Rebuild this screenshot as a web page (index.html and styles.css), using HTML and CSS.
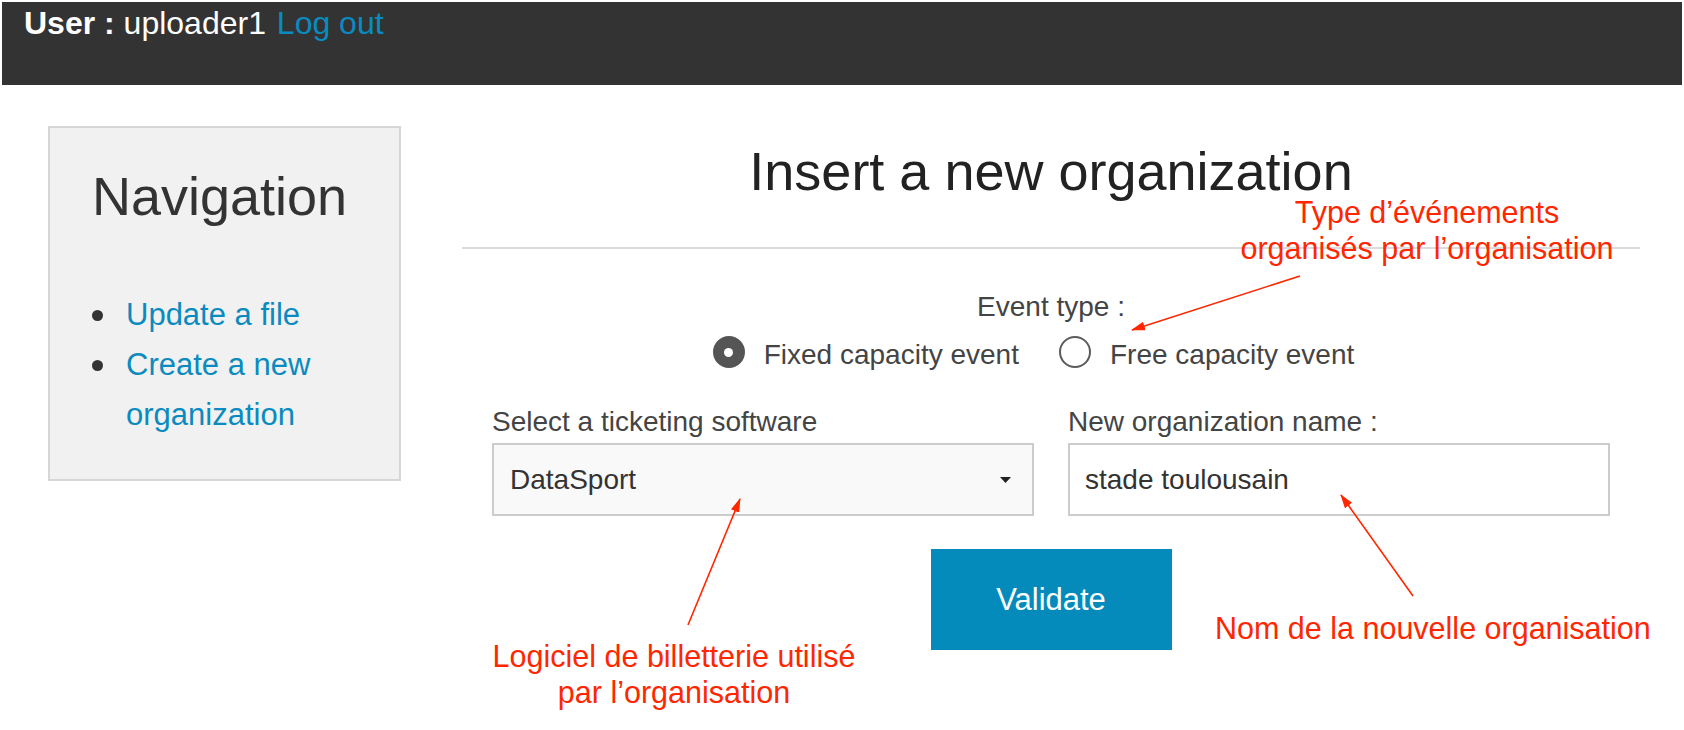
FILE: index.html
```html
<!DOCTYPE html>
<html lang="en">
<head>
<meta charset="utf-8">
<title>Insert a new organization</title>
<link rel="stylesheet" href="styles.css">
</head>
<body>
<div class="page">
  <header class="topbar">
    <span class="user"><b>User :</b> uploader1</span>
    <a class="logout" href="#">Log out</a>
  </header>

  <div class="layout">
    <aside class="nav">
      <h2 class="nav-title">Navigation</h2>
      <ul class="nav-list">
        <li><a href="#">Update a file</a></li>
        <li><a href="#">Create a new organization</a></li>
      </ul>
    </aside>

    <main class="main">
      <h1 class="title">Insert a new organization</h1>
      <hr class="rule">
      <form class="form">
        <div class="event-label">Event type :</div>
        <div class="radios">
          <label class="radio"><span class="dot checked"></span>Fixed capacity event</label>
          <label class="radio"><span class="dot"></span>Free capacity event</label>
        </div>
        <div class="fields">
          <div class="field">
            <div class="field-label">Select a ticketing software</div>
            <div class="select">
              <span>DataSport</span>
              <svg class="caret" width="11" height="6" viewBox="0 0 11 6"><polygon points="0,0 11,0 5.5,6" fill="#222"/></svg>
            </div>
          </div>
          <div class="field">
            <div class="field-label">New organization name :</div>
            <input class="text" type="text" value="stade toulousain">
          </div>
        </div>
        <div class="actions">
          <button class="validate" type="button">Validate</button>
        </div>
      </form>
    </main>
  </div>

  <div class="note note-type">Type d’événements<br>organisés par l’organisation</div>
  <div class="note note-soft">Logiciel de billetterie utilisé<br>par l’organisation</div>
  <div class="note note-name">Nom de la nouvelle organisation</div>

  <svg class="arrows" width="1684" height="730" viewBox="0 0 1684 730">
    <defs>
      <marker id="ah" viewBox="0 0 14 9" refX="13" refY="4.5" markerWidth="14" markerHeight="9" markerUnits="userSpaceOnUse" orient="auto">
        <path d="M0,0 L14,4.5 L0,9 z" fill="#ff2600"/>
      </marker>
    </defs>
    <line x1="1300" y1="276" x2="1132" y2="330" stroke="#ff2600" stroke-width="1.6" marker-end="url(#ah)"/>
    <line x1="688" y1="625" x2="740" y2="499" stroke="#ff2600" stroke-width="1.6" marker-end="url(#ah)"/>
    <line x1="1413" y1="596" x2="1341" y2="495" stroke="#ff2600" stroke-width="1.6" marker-end="url(#ah)"/>
  </svg>
</div>
</body>
</html>
```

FILE: styles.css
```css
html, body {
  margin: 0;
  padding: 0;
  background: #fff;
}

body {
  font-family: "Liberation Sans", Arial, Helvetica, sans-serif;
}

.page {
  position: relative;
  width: 1684px;
  height: 730px;
  overflow: hidden;
}

/* Top bar */
.topbar {
  margin: 2px 2px 0;
  height: 83px;
  box-sizing: border-box;
  padding: 3px 0 0 22px;
  background: #333;
  color: #fff;
  font-size: 32px;
  line-height: 36px;
}

.user b {
  font-weight: bold;
}

.logout {
  color: #0a8bc0;
  text-decoration: none;
  margin-left: 2px;
}

/* Layout */
.layout {
  display: flex;
  align-items: flex-start;
  padding: 41px 0 0 48px;
}

/* Navigation box */
.nav {
  width: 353px;
  box-sizing: border-box;
  border: 2px solid #d6d6d6;
  background: #f1f1f1;
  padding: 38px 20px 39px 42px;
}

.nav-title {
  margin: 0;
  font-size: 54px;
  line-height: 60px;
  font-weight: normal;
  color: #333;
}

.nav-list {
  list-style: none;
  margin: 64px 0 0;
  padding: 0;
  font-size: 31px;
  line-height: 50px;
}

.nav-list li {
  display: flex;
}

.nav-list li::before {
  content: "";
  flex: none;
  width: 11px;
  height: 11px;
  border-radius: 50%;
  background: #333;
  margin: 20px 23px 0 0;
}

.nav-list a {
  color: #0a8bbf;
  text-decoration: none;
}

/* Main */
.main {
  margin-left: 61px;
  width: 1178px;
  padding-top: 15px;
}

.title {
  margin: 0;
  text-align: center;
  font-size: 54px;
  line-height: 60px;
  font-weight: normal;
  color: #222;
}

.rule {
  margin: 46px 0 0;
  border: 0;
  height: 2px;
  background: #dcdcdc;
}

.form {
  width: 1118px;
  margin: 0 auto;
}

.event-label {
  margin-top: 41px;
  text-align: center;
  font-size: 28px;
  line-height: 34px;
  color: #444;
}

.radios {
  margin-top: 14px;
  display: flex;
  justify-content: center;
  gap: 40px;
  padding-right: 35px;
  font-size: 28px;
  line-height: 34px;
  color: #444;
}

.radio {
  display: flex;
  align-items: flex-start;
}

.dot {
  flex: none;
  width: 32px;
  height: 32px;
  box-sizing: border-box;
  border-radius: 50%;
  border: 2px solid #5a5a5a;
  background: #fff;
  margin: -2px 19px 0 0;
}

.dot.checked {
  background: #555;
  border-color: #555;
  display: flex;
  align-items: center;
  justify-content: center;
}

.dot.checked::after {
  content: "";
  width: 9px;
  height: 9px;
  border-radius: 50%;
  background: #fff;
}

.fields {
  margin-top: 33px;
  display: flex;
  gap: 34px;
}

.field {
  flex: 1;
  min-width: 0;
}

.field-label {
  font-size: 28px;
  line-height: 34px;
  color: #444;
  margin-bottom: 4px;
}

.select {
  height: 73px;
  box-sizing: border-box;
  border: 2px solid #ccc;
  background: #f9f9f9;
  display: flex;
  align-items: center;
  justify-content: space-between;
  padding: 0 21px 0 16px;
  font-size: 28px;
  color: #333;
}

.caret {
  display: block;
}

.text {
  display: block;
  width: 100%;
  height: 73px;
  box-sizing: border-box;
  margin: 0;
  border: 2px solid #ccc;
  background: #fff;
  padding: 0 15px;
  font-family: "Liberation Sans", Arial, sans-serif;
  font-size: 28px;
  color: #333;
  outline: none;
}

.actions {
  display: flex;
  justify-content: center;
  margin-top: 33px;
}

.validate {
  width: 241px;
  height: 101px;
  border: 0;
  border-radius: 0;
  background: #058bbb;
  color: #fff;
  font-family: "Liberation Sans", Arial, sans-serif;
  font-size: 31px;
  padding: 0;
  cursor: pointer;
}

/* Annotations (overlay) */
.note {
  position: absolute;
  color: #ff2600;
  font-size: 30.5px;
  line-height: 36px;
  white-space: nowrap;
}

.note-type {
  left: 1217px;
  top: 194px;
  width: 420px;
  text-align: center;
}

.note-soft {
  left: 474px;
  top: 638px;
  width: 400px;
  text-align: center;
}

.note-name {
  left: 1215px;
  top: 610px;
}

.arrows {
  position: absolute;
  left: 0;
  top: 0;
  pointer-events: none;
}
```
